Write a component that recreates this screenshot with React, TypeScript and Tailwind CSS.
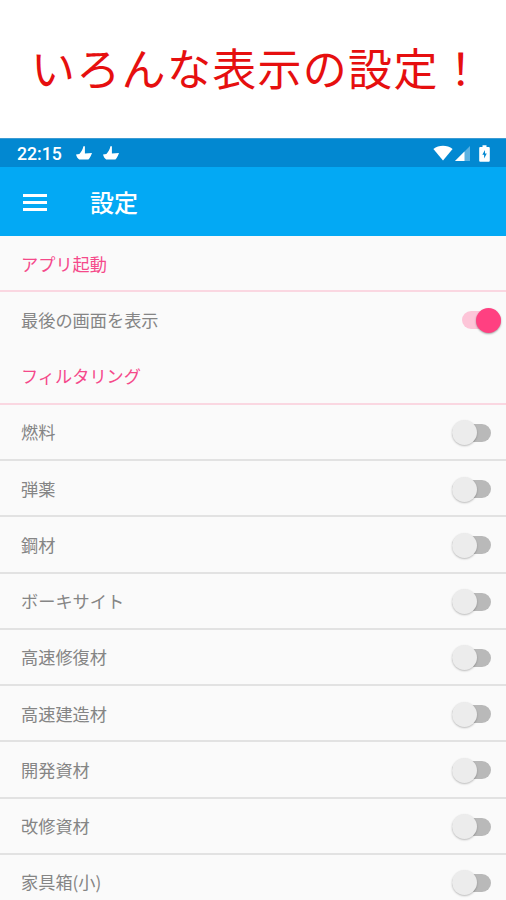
interface SettingRowProps {
  label: string;
  checked?: boolean;
  divider?: boolean;
}

const resources = [
  "燃料",
  "弾薬",
  "鋼材",
  "ボーキサイト",
  "高速修復材",
  "高速建造材",
  "開発資材",
  "改修資材",
  "家具箱(小)",
];

function ShipIcon() {
  return (
    <svg width="16" height="14" viewBox="0 0 16 14" fill="#fff">
      <path d="M7.4 0.2H8.9V7.6L16 7C15.2 9.6 14 11.8 12.4 13.6H3.2C1.6 12.2 0.6 10.6 0 8.4L3.4 8C5.4 5.8 6.8 3.4 7.4 0.2Z" />
    </svg>
  );
}

function StatusBar() {
  return (
    <div className="flex h-[29px] shrink-0 items-center border-t border-[#3c9bd3] bg-[#0288d1] pl-[17px] pr-[16px] text-white">
      <span className="w-[59px] pt-[3px] font-[Roboto,sans-serif] text-[17.7px] font-medium leading-none">
        22:15
      </span>
      <div className="flex gap-[11px]">
        <ShipIcon />
        <ShipIcon />
      </div>
      <div className="ml-auto flex items-center">
        <svg width="20" height="16" viewBox="0 0 20 16" fill="#fff">
          <path d="M10 15.5L0.4 3.9C5.8-0.3 14.2-0.3 19.6 3.9Z" />
        </svg>
        <svg className="ml-[2px]" width="15" height="15" viewBox="0 0 15 15">
          <path d="M15 0V15H0Z" fill="#fff" opacity="0.35" />
          <path d="M9.5 5.5V15H0Z" fill="#fff" />
        </svg>
        <svg className="ml-[9px]" width="11" height="17" viewBox="0 0 11 17">
          <path
            d="M3.5 0.3H7.5V2H9.5C10.3 2 10.8 2.5 10.8 3.2V15.5C10.8 16.3 10.3 16.8 9.5 16.8H1.5C0.7 16.8 0.2 16.3 0.2 15.5V3.2C0.2 2.5 0.7 2 1.5 2H3.5Z"
            fill="#fff"
          />
          <path d="M6 5L3.3 9.8H5.1V13.4L7.8 8.6H6Z" fill="#0288d1" />
        </svg>
      </div>
    </div>
  );
}

function AppBar() {
  return (
    <div className="flex h-[69px] shrink-0 items-center bg-[#03a9f4] pl-[23px] text-white">
      <div className="mt-[1px] flex w-[24px] flex-col gap-[4px]">
        <span className="h-[3px] bg-white" />
        <span className="h-[3px] bg-white" />
        <span className="h-[3px] bg-white" />
      </div>
      <h1 className="ml-[43px] text-[24px] font-medium leading-none">設定</h1>
    </div>
  );
}

function Toggle({ checked }: { checked?: boolean }) {
  if (checked) {
    return (
      <div className="mr-[5px] flex h-[18px] w-[39px] items-center justify-end rounded-full bg-[#fdc5d8]">
        <span className="h-[25px] w-[25px] shrink-0 rounded-full bg-[#ff4081] shadow-[0_1px_2px_rgba(0,0,0,0.35)]" />
      </div>
    );
  }
  return (
    <div className="mr-[15px] flex h-[18px] w-[39px] items-center rounded-full bg-[#b9b9b9]">
      <span className="h-[25px] w-[25px] shrink-0 rounded-full bg-[#ececec] shadow-[0_1px_2px_rgba(0,0,0,0.25)]" />
    </div>
  );
}

function SectionTitle({ label }: { label: string }) {
  return (
    <h2 className="flex h-[56.25px] shrink-0 items-center border-b-2 border-[#fad7e1] pl-[21px] pt-[1px] text-[17.2px] text-[#f5498a]">
      {label}
    </h2>
  );
}

function SettingRow({ label, checked, divider }: SettingRowProps) {
  return (
    <div
      className={`flex h-[56.25px] shrink-0 items-center justify-between border-b-2 pl-[21px] pt-[2px] ${
        divider ? "border-[#e2e2e2]" : "border-transparent"
      }`}
    >
      <span className="-mt-px text-[17.2px] text-[#858585]">{label}</span>
      <Toggle checked={checked} />
    </div>
  );
}

export default function App() {
  return (
    <div
      lang="ja"
      className="flex h-[900px] w-[506px] flex-col overflow-hidden bg-[#fafafa] font-['Noto_Sans_CJK_JP',sans-serif]"
    >
      <div className="flex h-[138px] shrink-0 items-center bg-white pb-[4px] pl-[31px]">
        <p className="whitespace-nowrap text-[44px] leading-none tracking-[1.3px] text-[#e60f0f]">
          いろんな表示の設定！
        </p>
      </div>
      <StatusBar />
      <AppBar />
      <SectionTitle label="アプリ起動" />
      <SettingRow label="最後の画面を表示" checked />
      <SectionTitle label="フィルタリング" />
      {resources.map((name) => (
        <SettingRow key={name} label={name} divider />
      ))}
    </div>
  );
}
